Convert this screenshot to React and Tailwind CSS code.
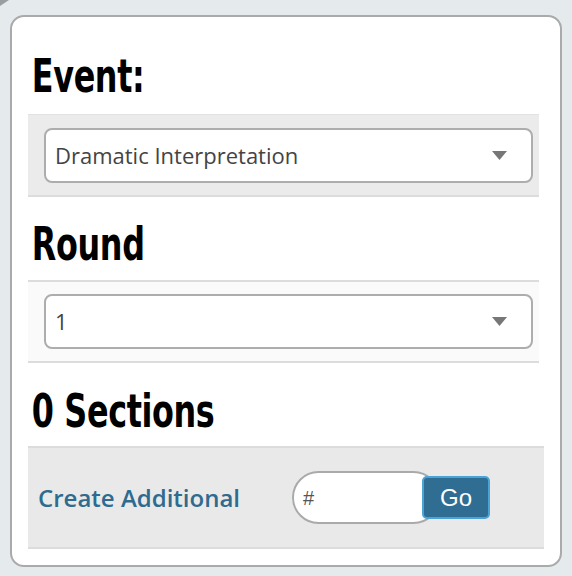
import React from 'react'

const heading = "font-['DejaVu_Sans_Condensed',sans-serif] font-bold text-[46px] leading-[52px] text-black tracking-[-0.5px] scale-x-[0.77] origin-left whitespace-nowrap"

function Caret() {
  return (
    <svg width="15" height="9" viewBox="0 0 15 9" className="shrink-0">
      <path d="M0 0 H15 L7.5 9 Z" fill="#777" />
    </svg>
  )
}

function FakeSelect({ value }) {
  return (
    <div className="h-[55px] bg-white border-2 border-[#adadad] rounded-[8px] flex items-center pl-[9px] pr-[24px]">
      <span className="flex-1 font-['Open_Sans',sans-serif] text-[22px] text-[#444]">{value}</span>
      <Caret />
    </div>
  )
}

export default function App() {
  return (
    <div className="relative w-[572px] h-[576px] bg-[#e5eaed] pt-[15px] pl-[10px] overflow-hidden">
      {/* stray corner arrow from the page above */}
      <svg width="9" height="6" viewBox="0 0 9 6" className="absolute left-0 top-0">
        <path d="M0 0 H9 L0 6 Z" fill="#9a9ea2" />
      </svg>

      <div className="w-[552px] h-[552px] bg-white border-2 border-[#aaa] rounded-[14px] pl-[16px] pr-[21px] pt-[33px]">
        <h2 className={`${heading} pl-[5px]`}>Event:</h2>
        <div className="mt-[12px] h-[83px] bg-[#ebebeb] border-t border-t-[#e2e2e2] border-b-2 border-b-[#dcdcdc] pl-[16px] pr-[6px] pt-[13px]">
          <FakeSelect value="Dramatic Interpretation" />
        </div>

        <h2 className={`${heading} pl-[5px] mt-[21px]`}>Round</h2>
        <div className="mt-[10px] h-[83px] bg-[#fafafa] border-t-2 border-t-[#dcdcdc] border-b-2 border-b-[#dcdcdc] pl-[16px] pr-[6px] pt-[12px]">
          <FakeSelect value="1" />
        </div>

        <h2 className={`${heading} pl-[5px] mt-[22px]`}>0 Sections</h2>
        <div className="mt-[9px] mr-[-5px] h-[103px] bg-[#e9e9e9] border-t-2 border-t-[#dcdcdc] border-b-2 border-b-[#dcdcdc] pl-[10px] flex items-center">
          <span className="w-[254px] font-['Open_Sans',sans-serif] font-semibold text-[24px] text-[#2e6b8f]">Create Additional</span>
          <div className="w-[148px] h-[53px] bg-white border-2 border-[#aaa] rounded-full flex items-center pl-[9px] font-['Liberation_Sans',sans-serif] text-[20px] text-[#555]">
            #
          </div>
          <button className="relative ml-[-18px] w-[68px] h-[43px] bg-[#2f6e92] border-2 border-[#4ba3d6] rounded-[5px] text-white font-['Liberation_Sans',sans-serif] text-[24px] leading-none">
            Go
          </button>
        </div>
      </div>
    </div>
  )
}
